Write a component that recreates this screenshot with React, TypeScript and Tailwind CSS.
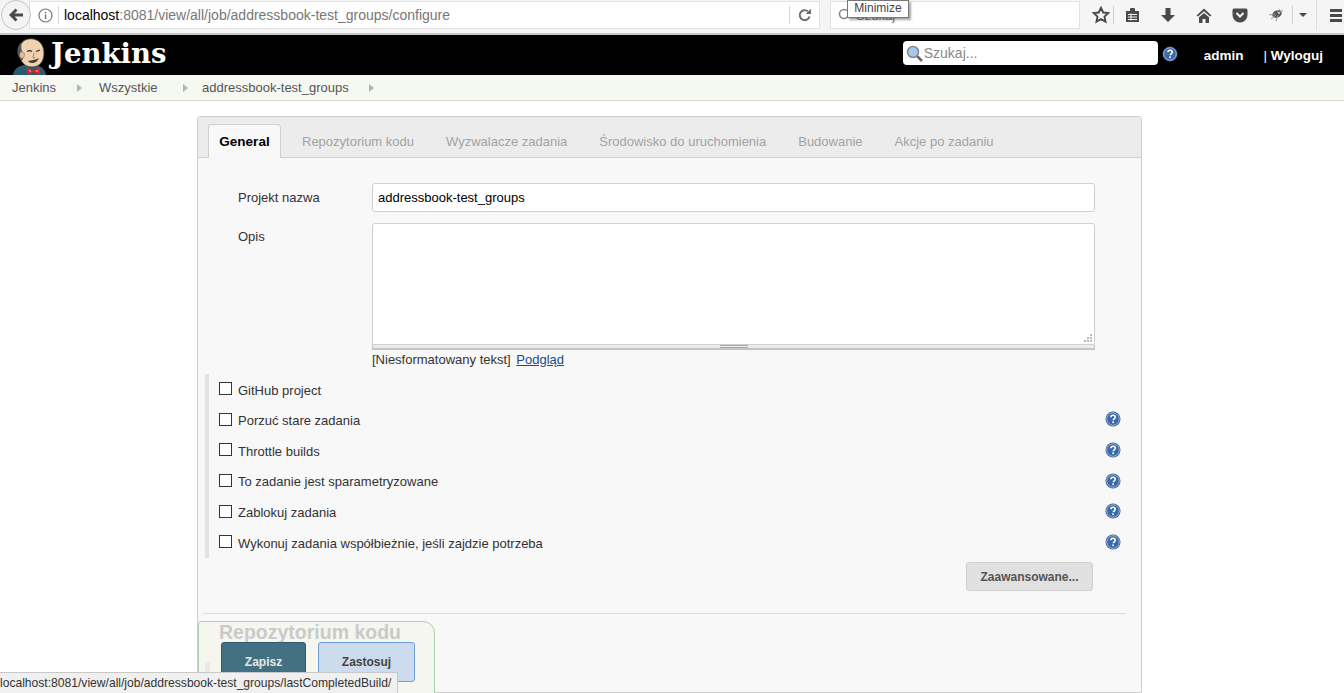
import React from 'react';

const tabs = ['Repozytorium kodu', 'Wyzwalacze zadania', 'Środowisko do uruchomienia', 'Budowanie', 'Akcje po zadaniu'];

const options = [
  { label: 'GitHub project', help: false },
  { label: 'Porzuć stare zadania', help: true },
  { label: 'Throttle builds', help: true },
  { label: 'To zadanie jest sparametryzowane', help: true },
  { label: 'Zablokuj zadania', help: true },
  { label: 'Wykonuj zadania współbieżnie, jeśli zajdzie potrzeba', help: true },
];

const HelpIcon = ({ size = 16 }: { size?: number }) => (
  <svg width={size} height={size} viewBox="0 0 16 16" className="shrink-0">
    <circle cx="8" cy="8" r="7.5" fill="#2f5a96" />
    <circle cx="8" cy="8" r="6.2" fill="none" stroke="#c4d4e8" strokeWidth="0.9" />
    <circle cx="8" cy="8" r="5.4" fill="#3b68a6" />
    <path d="M5.9 6.3c0-1.3 1-2 2.2-2s2.1.8 2.1 1.9c0 1.6-1.9 1.6-1.9 3.1" fill="none" stroke="#fff" strokeWidth="1.6" />
    <rect x="7.3" y="10.4" width="1.7" height="1.7" fill="#fff" />
  </svg>
);

const Crumb = ({ label, width }: { label: string; width: string }) => (
  <div className={`flex items-center ${width}`}>
    <span>{label}</span>
    <svg width="5" height="8" viewBox="0 0 5 8" className="ml-auto">
      <path d="M0 0l5 4-5 4z" fill="#b4b4b4" />
    </svg>
  </div>
);

const JenkinsHead = () => (
  <svg width="36" height="37" viewBox="0 0 36 37">
    <path d="M0 37c1-6 5-9 11-10h12c5 1 9 4 10 10z" fill="#2b5a70" />
    <path d="M6 14C6 5 11 .8 18 .8S31 6 31 15c0 8-4 14-12 14-6 0-9-3-11-7z" fill="#f0d2ae" stroke="#3a3a3a" strokeWidth="0.8" />
    <path d="M8 22C3 17 3 8 9 4c-1 3-1 6 0 9 0 3 1 6 1 9z" fill="#55565a" />
    <ellipse cx="9" cy="17" rx="2.4" ry="3.4" fill="#e8bc9c" stroke="#7a5a48" strokeWidth="0.5" />
    <path d="M14 13.500c1.500-1 3.500-1 5 0M23 13.500l4-1.500" stroke="#333" strokeWidth="1.300" fill="none" />
    <path d="M21 15l-1 5h2.500" stroke="#a8785c" strokeWidth="0.9" fill="none" />
    <path d="M15 23c3-1 8-1 11-3-1 3-4 5-7 5-2 0-3-1-4-2z" fill="#4a3a32" />
    <path d="M14 29l6 3.500 7-3.500v8l-7-3-6 3z" fill="#d5262c" />
    <circle cx="17" cy="33" r="0.7" fill="#fff" />
    <circle cx="24" cy="33" r="0.7" fill="#fff" />
  </svg>
);

const BrowserBar = () => (
  <div className="relative flex h-[35px] items-start border-b-2 border-[#c8c8c8] bg-[#f5f5f5]">
    <div className="z-10 ml-[1px] flex h-[30px] w-[30px] items-center justify-center rounded-full border border-[#c4c4c4] bg-[#f4f4f4]">
      <svg width="16" height="14" viewBox="0 0 16 14">
        <path d="M7.5 0.5L1 7l6.500 6.500 2-2L6.600 8.600H15V5.400H6.600l2.900-2.900z" fill="#4a4a4a" />
      </svg>
    </div>
    <div className="-ml-[2px] mt-[1px] flex h-[28px] w-[791px] items-center border border-[#e2e2e2] bg-white pl-[8px]">
      <svg width="15" height="15" viewBox="0 0 15 15" className="shrink-0">
        <circle cx="7.5" cy="7.5" r="6.5" fill="none" stroke="#777" strokeWidth="1.2" />
        <rect x="6.8" y="6.5" width="1.5" height="4.5" fill="#777" />
        <rect x="6.8" y="3.8" width="1.5" height="1.6" fill="#777" />
      </svg>
      <div className="ml-[5px] h-[18px] w-px bg-[#d8d8d8]" />
      <span className="ml-[5px] pt-[1px] text-[14px] text-[#777]">
        <span className="text-black">localhost</span>:8081/view/all/job/addressbook-test_groups/configure
      </span>
      <div className="ml-auto h-[18px] w-px bg-[#d8d8d8]" />
      <svg width="14" height="14" viewBox="0 0 14 14" className="ml-[8px] mr-[7px] shrink-0">
        <path d="M11.5 8.5A5 5 0 1 1 10 3.4" fill="none" stroke="#6a6a6a" strokeWidth="1.9" />
        <path d="M7.8 6h5.2V0.8z" fill="#6a6a6a" />
      </svg>
    </div>
    <div className="ml-[10px] mt-[1px] flex h-[28px] w-[250px] items-center border border-[#e2e2e2] bg-white pl-[7px]">
      <svg width="14" height="14" viewBox="0 0 14 14">
        <circle cx="6" cy="6" r="4.5" fill="none" stroke="#888" strokeWidth="1.6" />
      </svg>
      <span className="ml-[4px] pt-[1px] text-[13px] text-[#777]">Szukaj</span>
    </div>
    {/* native tooltip over the search box */}
    <div className="absolute left-[847px] top-0 z-20 h-[18px] w-[62px] border border-[#777] bg-white text-center text-[12px] leading-[15px] text-[#444] shadow-[2px_2px_2px_rgba(0,0,0,0.35)]">
      Minimize
    </div>
    <div className="ml-[11px] flex h-[30px] items-center text-[#4a4a4a]">
      <svg width="18" height="18" viewBox="0 0 18 18" className="ml-[1px]">
        <path d="M9 1.800l2.200 4.700 5 .6-3.700 3.500 1 5.100L9 13.200l-4.500 2.500 1-5.100L1.800 7.100l5-.6z" fill="none" stroke="#4a4a4a" strokeWidth="1.9" />
      </svg>
      <div className="ml-[3px] h-[18px] w-px bg-[#cfcfcf]" />
      <svg width="15" height="16" viewBox="0 0 15 16" className="ml-[11px]">
        <path d="M1 4h13v11H1z" fill="#4a4a4a" />
        <rect x="5" y="1" width="5" height="4" rx="1" fill="#4a4a4a" />
        <path d="M3 7.500h9M3 10h9M3 12.500h9M6 6.500v7" stroke="#f5f5f5" strokeWidth="1" />
      </svg>
      <svg width="16" height="16" viewBox="0 0 16 16" className="ml-[20px]">
        <path d="M5.500 1h5v7h4.500L8 15 1 8h4.500z" fill="#4a4a4a" />
      </svg>
      <svg width="16" height="15" viewBox="0 0 16 15" className="ml-[20px]">
        <path d="M8 0.500L0.500 7.500 2 8.500 8 3.200l6 5.300 1.500-1z" fill="#4a4a4a" />
        <path d="M8 5L3 9.300V15h3.500v-4h3v4H13V9.300z" fill="#4a4a4a" />
      </svg>
      <svg width="16" height="15" viewBox="0 0 16 15" className="ml-[20px]">
        <path d="M2 0.500h12a1.500 1.500 0 0 1 1.500 1.500v5a7.500 7.500 0 0 1-15 0V2A1.500 1.500 0 0 1 2 0.500z" fill="#4a4a4a" />
        <path d="M4.500 5L8 8.500 11.500 5" fill="none" stroke="#f5f5f5" strokeWidth="2" />
      </svg>
      <svg width="16" height="14" viewBox="0 0 16 14" className="ml-[20px]">
        <ellipse cx="9" cy="6" rx="5" ry="3.500" fill="#555" transform="rotate(-25 9 6)" />
        <path d="M1 7l6-1M3 11l5-4M8 13l2-6M12 1L9 5M15 2l-4 3" stroke="#999" strokeWidth="1" />
        <circle cx="11" cy="5" r="1" fill="#ddd" />
      </svg>
      <div className="ml-[8px] h-[18px] w-px bg-[#cfcfcf]" />
      <svg width="8" height="4" viewBox="0 0 8 4" className="ml-[6px]">
        <path d="M0 0h8L4 4z" fill="#4a4a4a" />
      </svg>
      <div className="ml-[9px] h-[30px] w-px bg-[#dedede]" />
      <div className="ml-[13px] flex w-[12px] flex-col gap-[2px]">
        <div className="h-[3px] bg-[#4a4a4a]" />
        <div className="h-[3px] bg-[#4a4a4a]" />
        <div className="h-[3px] bg-[#4a4a4a]" />
      </div>
    </div>
  </div>
);

const JenkinsHeader = () => (
  <div className="flex h-[40px] items-center overflow-hidden bg-black">
    <div className="ml-[13px] mt-[3px] h-[37px] w-[36px]">
      <JenkinsHead />
    </div>
    <span className="ml-[2px] -mt-[2px] font-['DejaVu_Serif',serif] text-[27.5px] font-bold leading-none text-white">Jenkins</span>
    <div className="ml-auto -mt-[4px] flex h-[24px] w-[255px] items-center rounded-[4px] bg-white pl-[3px]">
      <svg width="17" height="17" viewBox="0 0 17 17" className="shrink-0">
        <path d="M11 11l5 5" stroke="#666" strokeWidth="2.500" />
        <circle cx="7" cy="7" r="5.500" fill="#a8c8e8" stroke="#7d8a96" strokeWidth="1.500" />
      </svg>
      <span className="ml-[1px] text-[14px] text-[#888]">Szukaj...</span>
    </div>
    <div className="ml-[4px] -mt-[2px]">
      <HelpIcon />
    </div>
    <span className="ml-[26px] pt-[2px] text-[13.5px] font-bold text-white">admin</span>
    <span className="ml-[20px] mr-[21px] pt-[2px] text-[13.5px] font-bold text-white">
      <span className="font-normal">| </span>Wyloguj
    </span>
  </div>
);

const Breadcrumbs = () => (
  <div className="flex h-[26px] items-center border-b border-[#d8dcd4] bg-[#f6f8f2] pl-[12px] pt-[1px] text-[13px] text-[#555]">
    <Crumb label="Jenkins" width="w-[70px]" />
    <div className="w-[17px]" />
    <Crumb label="Wszystkie" width="w-[89px]" />
    <div className="w-[14px]" />
    <Crumb label="addressbook-test_groups" width="w-[172px]" />
  </div>
);

const ConfigPanel = () => (
  <div className="ml-[197px] mt-[15px] h-[577px] w-[945px] rounded-t-[3px] border border-[#cfcfcf] bg-[#f8f8f8]">
    <div className="flex h-[41px] items-end border-b border-[#cfcfcf] bg-[#ececec] pl-[10px]">
      <div className="-mb-px flex h-[34px] w-[73px] items-center justify-center rounded-t-[4px] border border-b-0 border-[#cfcfcf] bg-[#f8f8f8] pt-[1px] text-[13.5px] font-bold text-black">
        General
      </div>
      <div className="flex h-[34px] items-center gap-[32px] pl-[21px] pt-[3px] text-[13px] text-[#a3a3a3]">
        {tabs.map((tab) => (
          <span key={tab}>{tab}</span>
        ))}
      </div>
    </div>

    <div className="pl-[40px] pt-[25px] text-[13px] text-[#333]">
      <div className="flex items-center">
        <span className="w-[134px]">Projekt nazwa</span>
        <div className="flex h-[29px] w-[723px] items-center rounded-[3px] border border-[#cfcfcf] bg-white pl-[5px] text-black">
          addressbook-test_groups
        </div>
      </div>
      <div className="mt-[11px] flex">
        <span className="w-[134px] pt-[4px]">Opis</span>
        <div className="w-[723px]">
          <div className="relative h-[122px] rounded-t-[3px] border border-[#cfcfcf] bg-white">
            <svg width="9" height="9" viewBox="0 0 9 9" className="absolute bottom-[1px] right-[2px]">
              <path d="M7 0h2v2H7zM4 3h2v2H4zM7 3h2v2H7zM1 6h2v2H1zM4 6h2v2H4zM7 6h2v2H7z" fill="#bbb" />
            </svg>
          </div>
          <div className="flex h-[5px] items-center justify-center border-x border-b-2 border-[#c4c4c4] bg-[#ececec]">
            <div className="h-[3px] w-[28px] border-y border-[#aaa]" />
          </div>
          <div className="mt-[1px] pb-[1px] leading-[17px]">
            [Niesformatowany tekst] <span className="ml-[2px] text-[#204a87] underline">Podgląd</span>
          </div>
        </div>
      </div>
    </div>

    <div className="ml-[7px] mt-[5px] h-[184px] w-[916px] border-l-[4px] border-[#e2e2e2] pl-[10px] pt-[1px] text-[13px] text-[#333]">
      {options.map((option) => (
        <div key={option.label} className="flex h-[30.6px] items-center">
          <div className="mb-[3px] h-[13px] w-[13px] border border-[#333] bg-white" />
          <span className="ml-[6px]">{option.label}</span>
          {option.help && (
            <div className="ml-auto mb-[3px]">
              <HelpIcon />
            </div>
          )}
        </div>
      ))}
    </div>

    <div className="mt-[4px] flex justify-end pr-[48px]">
      <div className="flex h-[29px] w-[127px] items-center justify-center rounded-[3px] border border-[#cfcfcf] bg-[#e0e0e0] text-[12px] font-bold text-[#555]">
        Zaawansowane...
      </div>
    </div>
    <div className="ml-[5px] mt-[22px] w-[923px] border-t border-[#dcdcdc]" />
  </div>
);

export default function App() {
  return (
    <div className="relative h-[693px] w-[1344px] overflow-hidden bg-white font-['Liberation_Sans',Arial,sans-serif]">
      <BrowserBar />
      <JenkinsHeader />
      <Breadcrumbs />
      <ConfigPanel />

      {/* sticky save bar floating over the form */}
      <div className="absolute left-[198px] top-[621px] h-[80px] w-[237px] rounded-tr-[12px] rounded-tl-[3px] border border-[#a8d0b8] bg-[#f5f7ef]">
        <div className="ml-[20px] text-[19.5px] font-bold leading-[20px] text-[#cacaca]">Repozytorium kodu</div>
        <div className="ml-[22px] flex gap-[12px] text-[12px] font-bold">
          <div className="flex h-[40px] w-[85px] items-center justify-center rounded-[3px] border border-[#33596a] bg-[#447083] text-[#e8e8e8]">
            Zapisz
          </div>
          <div className="flex h-[40px] w-[97px] items-center justify-center rounded-[3px] border border-[#6a9fd8] bg-[#ccdcee] text-[#444]">
            Zastosuj
          </div>
        </div>
        <div className="absolute left-[6px] top-[40px] h-[12px] w-[5px] bg-[#eaeaea]" />
      </div>

      {/* browser status bar */}
      <div className="absolute bottom-0 left-0 flex h-[21px] w-[398px] items-center overflow-hidden whitespace-nowrap rounded-tr-[2px] border-r border-t border-[#c8c8c8] bg-[#f0f0f0] text-[12.1px] text-[#333]">
        localhost:8081/view/all/job/addressbook-test_groups/lastCompletedBuild/
      </div>
    </div>
  );
}
